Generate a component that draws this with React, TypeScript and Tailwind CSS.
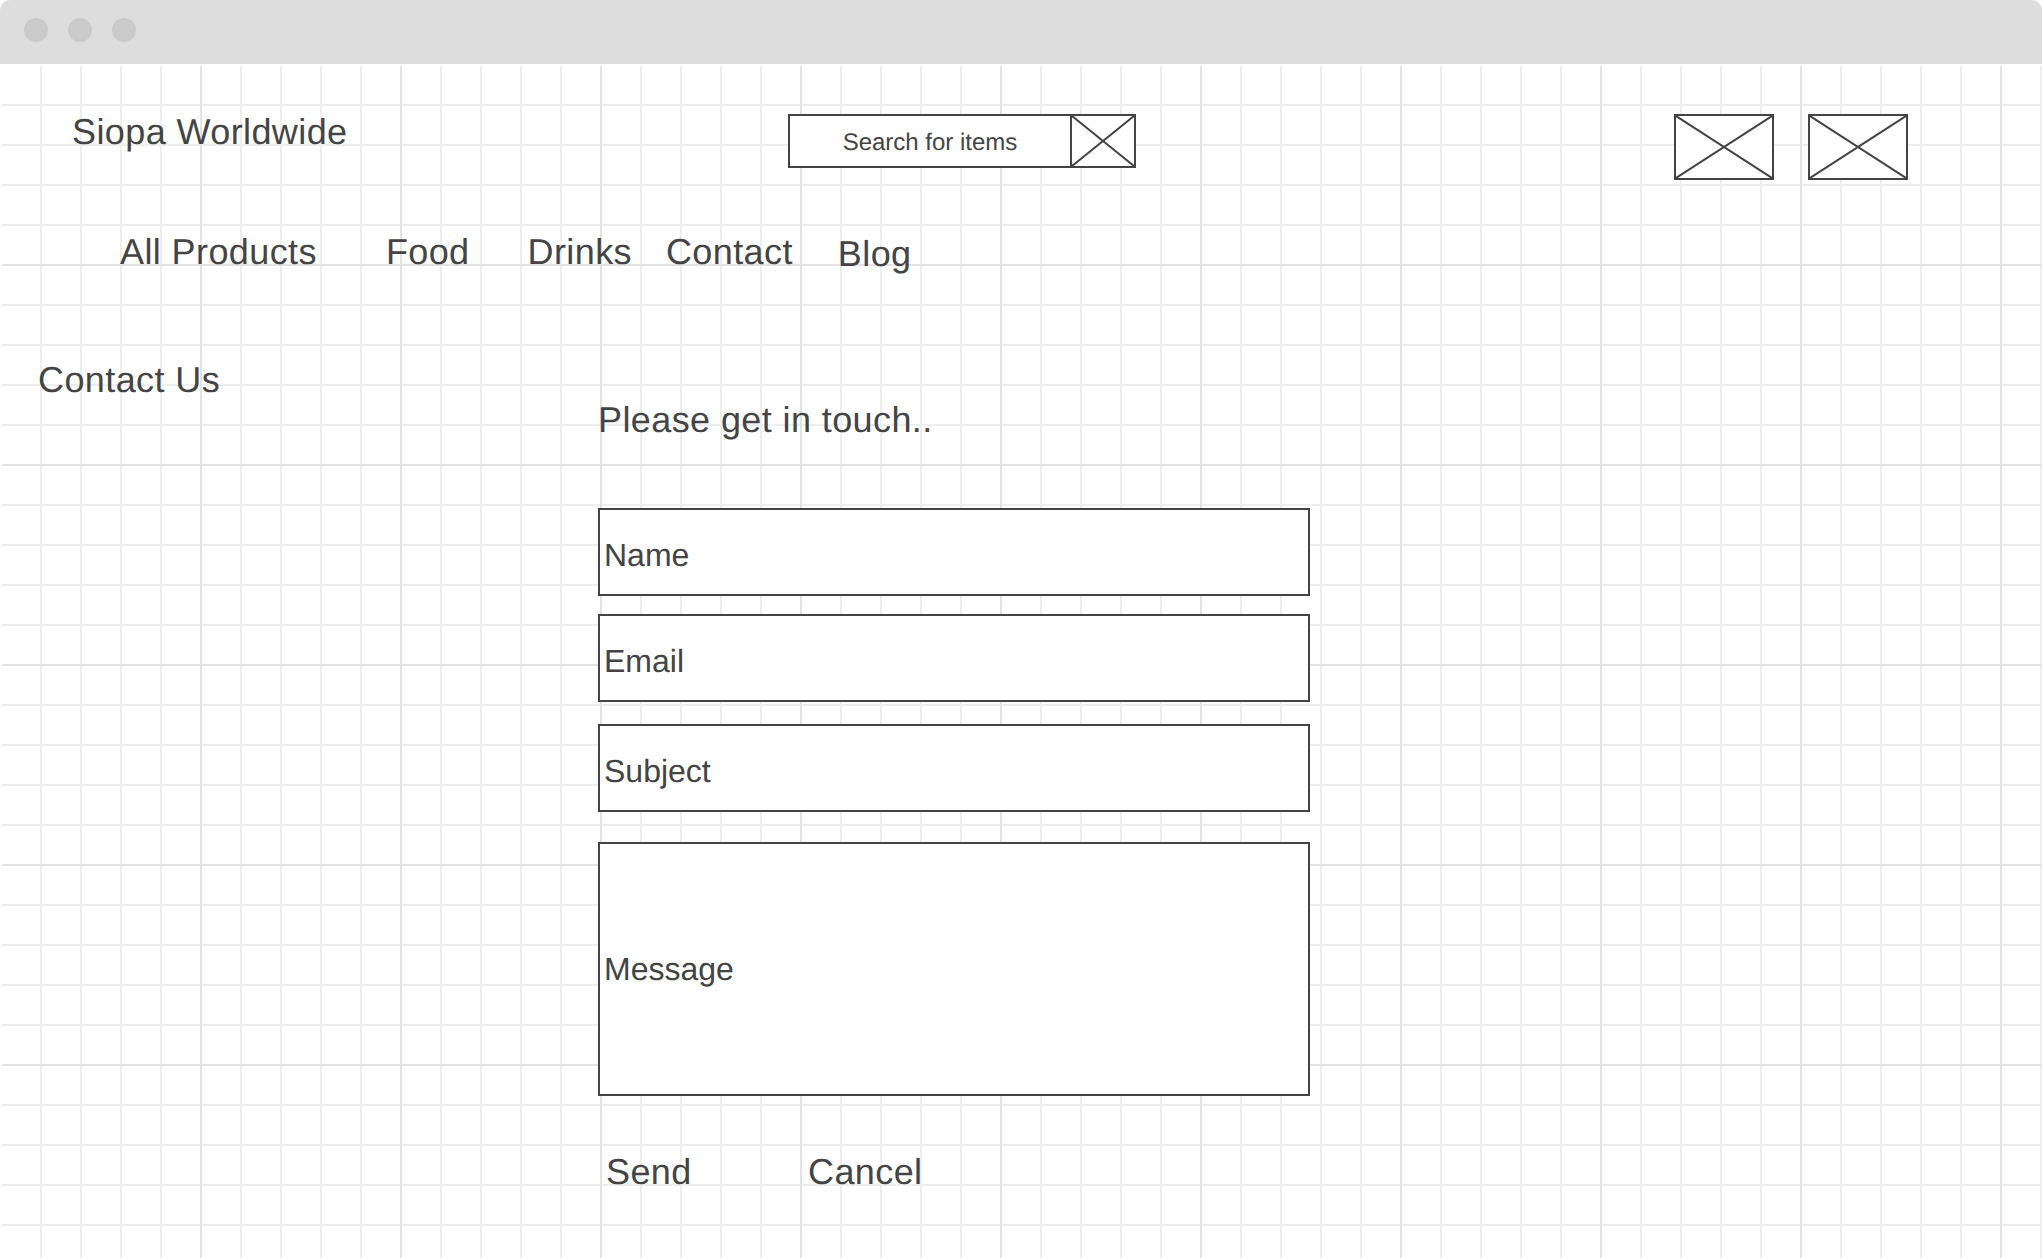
const gridBackground =
  'bg-[linear-gradient(to_right,transparent_198px,#e3e3e3_198px),linear-gradient(to_bottom,transparent_198px,#e3e3e3_198px),linear-gradient(to_right,transparent_38px,#eeeeee_38px),linear-gradient(to_bottom,transparent_38px,#eeeeee_38px)] bg-[size:200px_200px,200px_200px,40px_40px,40px_40px]';

const NAV_ITEMS = [
  { label: 'All Products', className: 'ml-[118px]' },
  { label: 'Food', className: 'ml-[69px]' },
  { label: 'Drinks', className: 'ml-[58px]' },
  { label: 'Contact', className: 'ml-[34px]' },
  { label: 'Blog', className: 'ml-[45px] mt-[2px]' },
];

function CrossBox({ className }: { className: string }) {
  return (
    <div className={`border-2 border-[#444444] bg-white ${className}`}>
      <svg className="block h-full w-full" viewBox="0 0 100 100" preserveAspectRatio="none">
        <path d="M0 0L100 100M100 0L0 100" stroke="#444444" strokeWidth="2" vectorEffect="non-scaling-stroke" fill="none" />
      </svg>
    </div>
  );
}

function Field({ label, className }: { label: string; className: string }) {
  return (
    <div className={`flex w-[712px] items-center border-2 border-[#444444] bg-white pl-[4px] text-[32px] ${className}`}>
      {label}
    </div>
  );
}

export default function App() {
  return (
    <div className="h-[1258px] w-[2042px] overflow-hidden bg-white font-['Liberation_Sans',Arial,sans-serif] text-[#444444] antialiased [text-rendering:geometricPrecision]">
      {/* Browser chrome */}
      <div className="flex h-16 items-start gap-[20px] rounded-t-[10px] bg-[#dddddd] pl-[24px] pt-[18px]">
        <span className="h-6 w-6 rounded-full bg-[#cacaca]" />
        <span className="h-6 w-6 rounded-full bg-[#cacaca]" />
        <span className="h-6 w-6 rounded-full bg-[#cacaca]" />
      </div>

      <div className={`ml-[2px] mt-[2px] h-[1192px] ${gridBackground}`}>
        {/* Header */}
        <div className="flex items-start pl-[70px] pt-[48px]">
          <div className="-mt-[2px] w-[716px] text-[36px] leading-[40px] tracking-[0.4px]">Siopa Worldwide</div>
          <div className="flex h-[54px] w-[348px] border-2 border-[#444444] bg-white">
            <div className="flex flex-1 items-center justify-center pt-[4px] text-[24px]">Search for items</div>
            <CrossBox className="h-[54px] w-[66px] -my-[2px] -mr-[2px] shrink-0" />
          </div>
          <div className="ml-[538px] flex gap-[34px]">
            <CrossBox className="h-[66px] w-[100px]" />
            <CrossBox className="h-[66px] w-[100px]" />
          </div>
        </div>

        {/* Nav */}
        <div className="mt-[52px] flex items-start text-[36px] leading-[40px] tracking-[0.4px]">
          {NAV_ITEMS.map((item) => (
            <div key={item.label} className={item.className}>
              {item.label}
            </div>
          ))}
        </div>

        {/* Main */}
        <div className="mt-[86px] flex items-start">
          <div className="w-[596px] pl-[36px] text-[36px] leading-[40px] tracking-[0.4px]">Contact Us</div>
          <div className="pt-[40px]">
            <div className="text-[36px] leading-[40px] tracking-[0.4px]">Please get in touch..</div>
            <Field label="Name" className="mt-[68px] h-[88px] pt-[6px]" />
            <Field label="Email" className="mt-[18px] h-[88px] pt-[6px]" />
            <Field label="Subject" className="mt-[22px] h-[88px] pt-[6px]" />
            <Field label="Message" className="mt-[30px] h-[254px]" />
            <div className="mt-[56px] flex pl-[8px] text-[36px] leading-[40px] tracking-[0.4px]">
              <span className="w-[202px]">Send</span>
              <span>Cancel</span>
            </div>
          </div>
        </div>
      </div>
    </div>
  );
}
